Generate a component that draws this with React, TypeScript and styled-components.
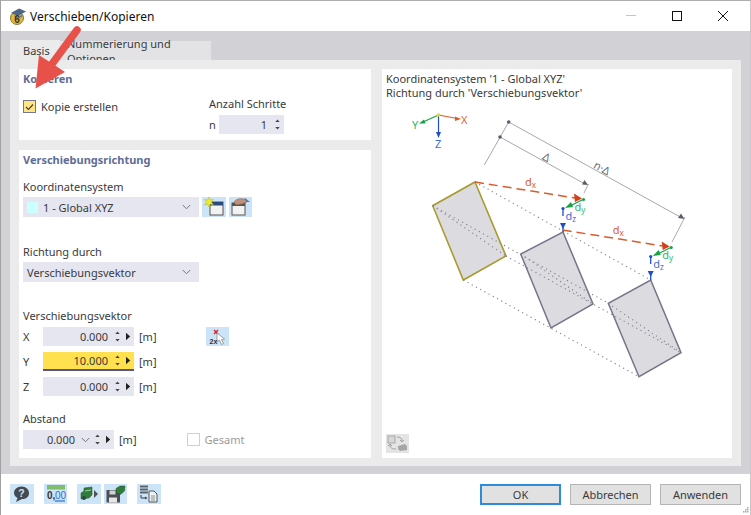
import React from 'react'
import styled, { createGlobalStyle } from 'styled-components'

const GlobalStyle = createGlobalStyle`
  html, body {
    margin: 0;
    padding: 0;
    background: #fff;
    overflow: hidden;
  }
  * {
    box-sizing: border-box;
  }
`

const Window = styled.div`
  position: relative;
  display: flex;
  flex-direction: column;
  width: 751px;
  height: 515px;
  border-top: 1px solid #adadad;
  border-left: 1px solid #a0a0a0;
  border-right: 1px solid #c8c8c8;
  font-family: 'Noto Sans', 'Open Sans', sans-serif;
  font-size: 11px;
  color: #3a3a3a;
  background: #fff;
`
const TitleBar = styled.div`
  display: flex;
  align-items: center;
  flex: none;
  height: 30px;
  padding-left: 8px;
  background: #fff;
`
const TitleText = styled.div`
  margin-left: 3px;
  font-size: 12px;
  color: #111;
`
const WindowControls = styled.div`
  display: flex;
  align-items: center;
  margin-left: auto;
  padding-right: 4px;
`
const WindowControl = styled.div`
  display: flex;
  align-items: center;
  justify-content: center;
  width: 46px;
  height: 30px;
`
const Body = styled.div`
  flex: 1;
  display: flex;
  flex-direction: column;
  padding: 10px 9px 8px 9px;
  background: #d2d2d6;
  min-height: 0;
`
const Tabs = styled.div`
  display: flex;
  align-items: flex-end;
  flex: none;
  height: 19px;
`
const Tab = styled.div<{ $active?: boolean }>`
  display: flex;
  align-items: center;
  height: ${props => (props.$active ? '20px' : '19px')};
  padding-left: ${props => (props.$active ? '13px' : '7px')};
  width: ${props => (props.$active ? '50px' : '151px')};
  background: ${props => (props.$active ? '#ebebeb' : '#e3e3e5')};
`
const Panel = styled.div`
  flex: 1;
  display: grid;
  grid-template-columns: 352px 350px;
  column-gap: 11px;
  padding: 9px 9px 8px 9px;
  background: #ebebeb;
  min-height: 0;
`
const LeftColumn = styled.div`
  display: flex;
  flex-direction: column;
  gap: 10px;
`
const Card = styled.div<{ $grow?: boolean }>`
  ${props => (props.$grow ? 'flex: 1;' : 'height: 71px;')}
  padding: 0 4px;
  background: #fff;
`
const CardHeading = styled.div`
  height: 19px;
  line-height: 19px;
  font-weight: 700;
  color: #5f6d96;
`
const CopyRow = styled.div`
  display: flex;
`
const CheckRow = styled.label<{ $disabled?: boolean }>`
  display: flex;
  align-items: center;
  gap: 5px;
  height: 13px;
  color: ${props => (props.$disabled ? '#9a9a9a' : 'inherit')};
`
const CheckSlot = styled.div`
  width: 186px;
  padding-top: 12px;
`
const Box = styled.span<{ $checked?: boolean }>`
  display: flex;
  align-items: center;
  justify-content: center;
  width: 13px;
  height: 13px;
  border: 1px solid ${props => (props.$checked ? '#77778a' : '#d0d0d0')};
  background: ${props => (props.$checked ? '#ffe680' : '#fff')};
`
const StepsSlot = styled.div`
  padding-top: 8px;
`
const Label = styled.div`
  height: 16px;
  line-height: 16px;
`
const StepRow = styled.div`
  display: flex;
  align-items: center;
  margin-top: 3px;
`
const AxisName = styled.div<{ $width: number }>`
  width: ${props => props.$width}px;
  flex: none;
`
const Group = styled.div<{ $top: number }>`
  margin-top: ${props => props.$top}px;
`
const ComboLine = styled.div`
  display: flex;
  gap: 3px;
  margin-top: 2px;
`
const Combo = styled.div`
  display: flex;
  align-items: center;
  justify-content: space-between;
  width: 176px;
  height: 20px;
  padding: 0 8px 0 4px;
  background: #e6e6f0;
`
const ComboValue = styled.div`
  display: flex;
  align-items: center;
  gap: 5px;
`
const Swatch = styled.span`
  width: 11px;
  height: 11px;
  background: #ccffff;
`
const IconButton = styled.div`
  display: flex;
  align-items: center;
  justify-content: center;
  flex: none;
  width: 23.5px;
  height: 19.5px;
  background: #cce4f7;
`
const VectorRows = styled.div`
  display: flex;
  flex-direction: column;
  gap: 6px;
  margin-top: 3px;
`
const VectorRow = styled.div`
  display: flex;
  align-items: center;
  height: 19px;
`
const NumberField = styled.div<{ $width: number; $highlight?: boolean }>`
  display: flex;
  align-items: center;
  justify-content: flex-end;
  flex: none;
  width: ${props => props.$width}px;
  height: 19px;
  background: ${props => (props.$highlight ? '#ffe14f' : '#e6e6f0')};
  border-bottom: ${props => (props.$highlight ? '2px solid #55559c' : 'none')};
`
const FieldValue = styled.span`
  margin-right: 6px;
`
const Unit = styled.div`
  margin-left: 5px;
  flex: none;
`
const VectorAction = styled(IconButton)`
  margin-left: 49px;
`
const DistanceRow = styled(VectorRow)`
  margin-top: 3px;
`
const TotalCheck = styled.div`
  margin-left: 50px;
`
const DiagramCard = styled.div`
  display: flex;
  flex-direction: column;
  padding: 3px 0 4px 0;
  background: #fff;
`
const DiagramCaption = styled.div`
  padding-left: 4px;
  height: 29px;
  line-height: 14px;
`
const DiagramDrawing = styled.svg`
  display: block;
  flex: none;
`
const ViewButton = styled.div`
  display: flex;
  align-items: center;
  justify-content: center;
  width: 23px;
  height: 19px;
  margin-left: 4px;
  background: #e4e4e4;
`
const Footer = styled.div`
  display: flex;
  align-items: flex-start;
  flex: none;
  height: 41px;
  padding: 10px 9px 0 9px;
  background: #fff;
`
const FooterIcons = styled.div`
  display: flex;
  padding-top: 0;
`
const FooterIcon = styled(IconButton)<{ $gap?: number }>`
  margin-left: ${props => props.$gap ?? 0}px;
`
const DialogButtons = styled.div`
  display: flex;
  gap: 9px;
  margin-left: auto;
`
const DialogButton = styled.div<{ $primary?: boolean }>`
  display: flex;
  align-items: center;
  justify-content: center;
  width: 81px;
  height: 21px;
  background: #e1e1e1;
  border: ${props => (props.$primary ? '2px solid #2f8bd8' : '1px solid #b4b4b4')};
`
const Grip = styled.svg`
  position: absolute;
  right: 1px;
  bottom: 2px;
`
const CalloutArrow = styled.svg`
  position: absolute;
  left: -1px;
  top: -1px;
  pointer-events: none;
`

const Spin: React.FC = () => (
  <svg width="7" height="13" viewBox="0 0 7 13">
    <path d="M3.5 1.5 L5.7 4 H1.3 Z M3.5 11.5 L1.3 9 H5.7 Z" fill="#444" />
  </svg>
)
const Play: React.FC = () => (
  <svg width="6" height="9" viewBox="0 0 6 9">
    <path d="M1 .8 L5.2 4.5 L1 8.2 Z" fill="#222" />
  </svg>
)
const Chevron: React.FC = () => (
  <svg width="9" height="6" viewBox="0 0 9 6">
    <path d="M.8 1 L4.5 4.8 L8.2 1" fill="none" stroke="#777" strokeWidth="1" />
  </svg>
)

const SpinGroup = styled.div`
  display: flex;
  align-items: center;
  gap: 4px;
  margin-right: 3px;
`
const StepSpin = styled.div`
  display: flex;
  margin-right: 3px;
  margin-left: 1px;
`

const VectorField: React.FC<{ value: string; highlight?: boolean }> = ({ value, highlight }) => (
  <NumberField $width={91} $highlight={highlight}>
    <FieldValue>{value}</FieldValue>
    <SpinGroup>
      <Spin />
      <Play />
    </SpinGroup>
  </NumberField>
)

const AppIcon: React.FC = () => (
  <svg width="18" height="18" viewBox="0 0 18 18">
    <circle cx="8" cy="11" r="6.5" fill="#e0b93a" stroke="#8a7a3a" />
    <path d="M2 6 L10 1.5 L17 4.5 L9 9 Z" fill="#4d6683" />
    <path d="M5 8 L9 10 L14 7 L13 10 L9 12 L6 10 Z" fill="#6c8099" />
    <text x="8" y="15.5" fontSize="10" fontWeight="700" textAnchor="middle" fill="#3a3220" fontFamily="Liberation Sans, sans-serif">
      6
    </text>
  </svg>
)
const NewWindowIcon: React.FC = () => (
  <svg width="20" height="19" viewBox="0 0 20 19">
    <rect x="6" y="5" width="13" height="13" fill="#f2f2f2" stroke="#555" />
    <rect x="6" y="5" width="13" height="3.5" fill="#2c4a78" />
    <path d="M5 0 L6.2 3 L9.5 2.5 L7.4 5 L9.5 8 L6.2 7 L5 10 L3.8 7 L.5 8 L2.6 5 L.5 2.5 L3.8 3 Z" fill="#ecec30" stroke="#b5b520" strokeWidth=".5" />
  </svg>
)
const EditWindowIcon: React.FC = () => (
  <svg width="20" height="19" viewBox="0 0 20 19">
    <rect x="2" y="6" width="13" height="12" fill="#f2f2f2" stroke="#555" />
    <rect x="2" y="6" width="13" height="3" fill="#555" />
    <path d="M4 5 C6 2 10 1 13 2 L16 2 L17 5 L12 7 L6 8 Z" fill="#c09078" stroke="#7c6558" strokeWidth=".6" />
    <path d="M15 1 L20 5 L16 5 Z" fill="#4b7ab5" />
  </svg>
)
const ClearIcon: React.FC = () => (
  <svg width="23" height="19" viewBox="0 0 23 19">
    <path d="M8 3 L12 7 M12 3 L8 7" stroke="#d8262c" strokeWidth="1.5" />
    <path d="M11 6 L11 15 L13.5 13 L15.5 17.5 L17.5 16.5 L15.5 12.5 L18.5 12 Z" fill="#fff" stroke="#8b8b8b" strokeWidth=".8" />
    <text x="3.5" y="17" fontSize="7" fontWeight="700" fill="#333" fontFamily="Liberation Sans, sans-serif">
      2x
    </text>
  </svg>
)
const HelpIcon: React.FC = () => (
  <svg width="19" height="18" viewBox="0 0 19 18">
    <path d="M9.5 1.5 C14 1.5 17 4.5 17 8 C17 12 14 14 10 14 L4 17 L5.5 13 C3.5 12 2 10 2 8 C2 4.5 5 1.5 9.5 1.5 Z" fill="#444a50" />
    <text x="9.5" y="12" fontSize="10.5" fontWeight="700" textAnchor="middle" fill="#cce4f7" fontFamily="Liberation Sans, sans-serif">
      ?
    </text>
  </svg>
)
const DecimalsIcon: React.FC = () => (
  <svg width="23" height="19" viewBox="0 0 23 19">
    <rect x="3" y="1" width="18" height="4.5" fill="#80bd6d" />
    <text x="3" y="15" fontSize="10" fontWeight="700" fill="#333" fontFamily="Liberation Sans, sans-serif">
      0,
    </text>
    <text x="11" y="15" fontSize="10" fill="#2f6fd8" fontFamily="Liberation Sans, sans-serif">
      00
    </text>
    <path d="M11 17 H21" stroke="#2f6fd8" strokeWidth="1.2" />
  </svg>
)
const LoadIcon: React.FC = () => (
  <svg width="21" height="16" viewBox="0 0 21 16">
    <path d="M3 7 L6 5 L6 2 L14 1 L14 9 L11 12 L3 13 Z" fill="#2f7d3a" stroke="#25502c" strokeWidth=".5" />
    <path d="M7 5 L13 4" stroke="#9fd0a0" strokeWidth="1" />
    <circle cx="6" cy="12" r="2" fill="#30483a" />
    <path d="M16 4 L20 8 L16 12 Z" fill="#555" />
  </svg>
)
const SaveIcon: React.FC = () => (
  <svg width="21" height="18" viewBox="0 0 21 18">
    <path d="M1.5 5 H12 L15 8 V17.5 H1.5 Z" fill="#4c4f55" />
    <rect x="4.5" y="5.5" width="6" height="4" fill="#cfd3d8" />
    <rect x="4" y="12.5" width="8" height="5" fill="#e6e6e6" />
    <path d="M11 3.5 L15 1 L20 1 L19.5 6 L15.5 9.5 L11.5 8 Z" fill="#2f7d3a" stroke="#25502c" strokeWidth=".5" />
  </svg>
)
const CopyTableIcon: React.FC = () => (
  <svg width="21" height="19" viewBox="0 0 21 19">
    <path d="M2 2.5 H10 M2 5.5 H10 M2 8.5 H10" stroke="#5d646d" strokeWidth="2" />
    <path d="M3 11 V14 H8" fill="none" stroke="#3b3f45" />
    <path d="M7 12.5 L9.5 14 L7 15.5 Z" fill="#3b3f45" />
    <path d="M11 7 H16 L19 10 V18 H11 Z" fill="#eef0f2" stroke="#555" />
    <path d="M13 12 H17 M13 14 H17 M13 16 H17" stroke="#777" strokeWidth=".8" />
  </svg>
)
const SwapViewIcon: React.FC = () => (
  <svg width="21" height="17" viewBox="0 0 21 17">
    <rect x="1" y="1" width="7" height="7" fill="#d8d8d8" stroke="#a8a8a8" />
    <path d="M10 2 C13 2 15 3 15 6 M13 5 L15 7 L17 5" fill="none" stroke="#a2a2a2" />
    <path d="M9 14 C5 14 3 13 3 10 M1 11 L3 9 L5 11" fill="none" stroke="#a2a2a2" />
    <path d="M11 11 L18 9 L20 11 L20 15 L13 16 L11 14 Z" fill="#a6a6a6" />
  </svg>
)

const Sub = styled.tspan`
  font-size: 8px;
`
const AxisLabel = styled.text<{ $color: string; $size?: number }>`
  font-family: 'Noto Sans', sans-serif;
  font-size: ${props => props.$size ?? 11}px;
  fill: ${props => props.$color};
`

const Leaders: React.FC<{ dx: number; dy: number }> = ({ dx, dy }) => (
  <g transform={`translate(${dx} ${dy})`}>
    <path d="M475 182 L563 232" stroke="none" />
    <line x1="475" y1="182" x2="575" y2="198" stroke="#db5a2c" strokeWidth="1.5" strokeDasharray="9 5" />
    <path d="M574 193.5 L582 198.5 L575 202 Z" fill="#d2401a" />
    <circle cx="583.5" cy="199.5" r="1.6" fill="#17a24a" />
    <line x1="582" y1="200" x2="570" y2="206" stroke="#17a24a" strokeWidth="1.3" />
    <path d="M565 208 L571 202 L573 207 Z" fill="#17a24a" />
    <circle cx="563" cy="208.5" r="1.6" fill="#1e4fc8" />
    <line x1="563" y1="208" x2="563" y2="216" stroke="#1e4fc8" strokeWidth="1.3" />
    <path d="M560 223 H566 L563 229 Z" fill="#1e4fc8" />
    <line x1="563" y1="227" x2="563" y2="232" stroke="#1e4fc8" strokeWidth="1.3" />
    <AxisLabel x="525" y="186" $color="#db5a2c">
      d<Sub dy="2">x</Sub>
    </AxisLabel>
    <AxisLabel x="574.5" y="211" $color="#34b46a">
      d<Sub dy="2">y</Sub>
    </AxisLabel>
    <AxisLabel x="565.5" y="220" $color="#3e6fdc">
      d<Sub dy="2">z</Sub>
    </AxisLabel>
  </g>
)

const Diagram: React.FC = () => (
  <DiagramDrawing width="350" height="333" viewBox="382 101 350 333">
    {/* sheets */}
    <polygon points="475,182 506,256 463.3,280 432.7,205.7" fill="#dcdce0" stroke="#a99a30" strokeWidth="1.6" />
    <polygon points="563,232 593,304 551,328 520.7,254" fill="#dcdce0" stroke="#74748a" strokeWidth="1.5" />
    <polygon points="650.7,280 681,352.7 639,376.7 608.3,303.3" fill="#dcdce0" stroke="#74748a" strokeWidth="1.5" />
    {/* dotted construction lines */}
    <g stroke="#80808c" strokeWidth="1.1" strokeDasharray="1.2 3.6" fill="none">
      <line x1="475" y1="182" x2="650.7" y2="280" />
      <line x1="432.7" y1="205.7" x2="608.3" y2="303.3" />
      <line x1="506" y1="256" x2="681" y2="352.7" />
      <line x1="463.3" y1="280" x2="639" y2="376.7" />
      <line x1="432.7" y1="205.7" x2="506" y2="256" />
      <line x1="520.7" y1="254" x2="593" y2="304" />
      <line x1="608.3" y1="303.3" x2="681" y2="352.7" />
    </g>
    {/* coordinate axes */}
    <line x1="438.5" y1="115" x2="457" y2="118.5" stroke="#db5a2c" strokeWidth="1.2" />
    <path d="M461 119 L455 116.5 L455 121 Z" fill="#db5a2c" />
    <line x1="438.5" y1="115" x2="423" y2="122" stroke="#17a24a" strokeWidth="1.2" />
    <path d="M419 123.5 L424 119.5 L425.5 123.5 Z" fill="#17a24a" />
    <line x1="438.5" y1="115" x2="438.5" y2="133" stroke="#1e4fc8" strokeWidth="1.2" />
    <path d="M438.5 138 L436 132 H441 Z" fill="#1e4fc8" />
    <circle cx="438.5" cy="115" r="1.8" fill="#f0d020" />
    <AxisLabel x="461" y="123.5" $color="#e0623a" $size={11}>
      X
    </AxisLabel>
    <AxisLabel x="412" y="129" $color="#34b46a" $size={11}>
      Y
    </AxisLabel>
    <AxisLabel x="435" y="147.5" $color="#3e6fdc" $size={11}>
      Z
    </AxisLabel>
    {/* dimensions */}
    <g stroke="#a8a8ae" strokeWidth="1" fill="none">
      <line x1="508.7" y1="122" x2="484.3" y2="165" />
      <line x1="500" y1="137" x2="585" y2="184" />
      <line x1="508.7" y1="122" x2="682" y2="218" />
      <line x1="588.5" y1="184" x2="584" y2="193" />
      <line x1="685" y1="217" x2="672" y2="242" />
    </g>
    <circle cx="508.7" cy="122" r="1.8" fill="#5c5c68" />
    <circle cx="500" cy="137" r="1.8" fill="#5c5c68" />
    <path d="M588 185 L582 184.5 L584.5 180 Z" fill="#5c5c68" />
    <path d="M684.5 219 L678 218 L681 213.5 Z" fill="#5c5c68" />
    <AxisLabel x="546" y="161" $color="#6a6a72" textAnchor="middle" transform="rotate(29 546 158)">
      Δ
    </AxisLabel>
    <AxisLabel x="602" y="172" $color="#6a6a72" textAnchor="middle" transform="rotate(29 602 168)">
      n·Δ
    </AxisLabel>
    <Leaders dx={0} dy={0} />
    <Leaders dx={87.7} dy={48} />
  </DiagramDrawing>
)

const App: React.FC = () => (
  <>
    <GlobalStyle />
    <Window>
      <TitleBar>
        <AppIcon />
        <TitleText>Verschieben/Kopieren</TitleText>
        <WindowControls>
          <WindowControl>
            <svg width="10" height="2" viewBox="0 0 10 2">
              <rect width="10" height="1" fill="#c4c4c4" />
            </svg>
          </WindowControl>
          <WindowControl>
            <svg width="10" height="10" viewBox="0 0 10 10">
              <rect x=".5" y=".5" width="9" height="9" fill="none" stroke="#111" />
            </svg>
          </WindowControl>
          <WindowControl>
            <svg width="10" height="10" viewBox="0 0 10 10">
              <path d="M0 0 L10 10 M10 0 L0 10" stroke="#111" strokeWidth="1" />
            </svg>
          </WindowControl>
        </WindowControls>
      </TitleBar>
      <Body>
        <Tabs>
          <Tab $active>Basis</Tab>
          <Tab>Nummerierung und Optionen</Tab>
        </Tabs>
        <Panel>
          <LeftColumn>
            <Card>
              <CardHeading>Kopieren</CardHeading>
              <CopyRow>
                <CheckSlot>
                  <CheckRow>
                    <Box $checked>
                      <svg width="9" height="8" viewBox="0 0 9 8">
                        <path d="M1 4 L3.5 6.5 L8 1.5" fill="none" stroke="#444" strokeWidth="1.2" />
                      </svg>
                    </Box>
                    Kopie erstellen
                  </CheckRow>
                </CheckSlot>
                <StepsSlot>
                  <Label>Anzahl Schritte</Label>
                  <StepRow>
                    <AxisName $width={10}>n</AxisName>
                    <NumberField $width={65}>
                      <FieldValue>1</FieldValue>
                      <StepSpin>
                        <Spin />
                      </StepSpin>
                    </NumberField>
                  </StepRow>
                </StepsSlot>
              </CopyRow>
            </Card>
            <Card $grow>
              <CardHeading>Verschiebungsrichtung</CardHeading>
              <Group $top={10}>
                <Label>Koordinatensystem</Label>
                <ComboLine>
                  <Combo>
                    <ComboValue>
                      <Swatch />1 - Global XYZ
                    </ComboValue>
                    <Chevron />
                  </Combo>
                  <IconButton>
                    <NewWindowIcon />
                  </IconButton>
                  <IconButton>
                    <EditWindowIcon />
                  </IconButton>
                </ComboLine>
              </Group>
              <Group $top={27}>
                <Label>Richtung durch</Label>
                <ComboLine>
                  <Combo>
                    <ComboValue>Verschiebungsvektor</ComboValue>
                    <Chevron />
                  </Combo>
                </ComboLine>
              </Group>
              <Group $top={26}>
                <Label>Verschiebungsvektor</Label>
                <VectorRows>
                  <VectorRow>
                    <AxisName $width={20}>X</AxisName>
                    <VectorField value="0.000" />
                    <Unit>[m]</Unit>
                    <VectorAction>
                      <ClearIcon />
                    </VectorAction>
                  </VectorRow>
                  <VectorRow>
                    <AxisName $width={20}>Y</AxisName>
                    <VectorField value="10.000" highlight />
                    <Unit>[m]</Unit>
                  </VectorRow>
                  <VectorRow>
                    <AxisName $width={20}>Z</AxisName>
                    <VectorField value="0.000" />
                    <Unit>[m]</Unit>
                  </VectorRow>
                </VectorRows>
              </Group>
              <Group $top={15}>
                <Label>Abstand</Label>
                <DistanceRow>
                  <NumberField $width={91}>
                    <FieldValue>0.000</FieldValue>
                    <SpinGroup>
                      <Chevron />
                      <Spin />
                      <Play />
                    </SpinGroup>
                  </NumberField>
                  <Unit>[m]</Unit>
                  <TotalCheck>
                    <CheckRow $disabled>
                      <Box />
                      Gesamt
                    </CheckRow>
                  </TotalCheck>
                </DistanceRow>
              </Group>
            </Card>
          </LeftColumn>
          <DiagramCard>
            <DiagramCaption>
              Koordinatensystem '1 - Global XYZ'
              <br />
              Richtung durch 'Verschiebungsvektor'
            </DiagramCaption>
            <Diagram />
            <ViewButton>
              <SwapViewIcon />
            </ViewButton>
          </DiagramCard>
        </Panel>
      </Body>
      <Footer>
        <FooterIcons>
          <FooterIcon>
            <HelpIcon />
          </FooterIcon>
          <FooterIcon $gap={10}>
            <DecimalsIcon />
          </FooterIcon>
          <FooterIcon $gap={10}>
            <LoadIcon />
          </FooterIcon>
          <FooterIcon $gap={3}>
            <SaveIcon />
          </FooterIcon>
          <FooterIcon $gap={10}>
            <CopyTableIcon />
          </FooterIcon>
        </FooterIcons>
        <DialogButtons>
          <DialogButton $primary>OK</DialogButton>
          <DialogButton>Abbrechen</DialogButton>
          <DialogButton>Anwenden</DialogButton>
        </DialogButtons>
      </Footer>
      <Grip width="6" height="6" viewBox="0 0 6 6">
        <path d="M4 0h1.5v1.5H4zM2 2h1.5v1.5H2zM4 2h1.5v1.5H4zM0 4h1.5v1.5H0zM2 4h1.5v1.5H2zM4 4h1.5v1.5H4z" fill="#aaa" />
      </Grip>
      <CalloutArrow width="110" height="100" viewBox="0 0 110 100">
        <path d="M77 30 L52 64" stroke="#e8504a" strokeWidth="7.5" strokeLinecap="round" fill="none" />
        <path d="M35.5 88.5 L39 55 L65 72 Z" fill="#e8504a" />
      </CalloutArrow>
    </Window>
  </>
)

export default App
